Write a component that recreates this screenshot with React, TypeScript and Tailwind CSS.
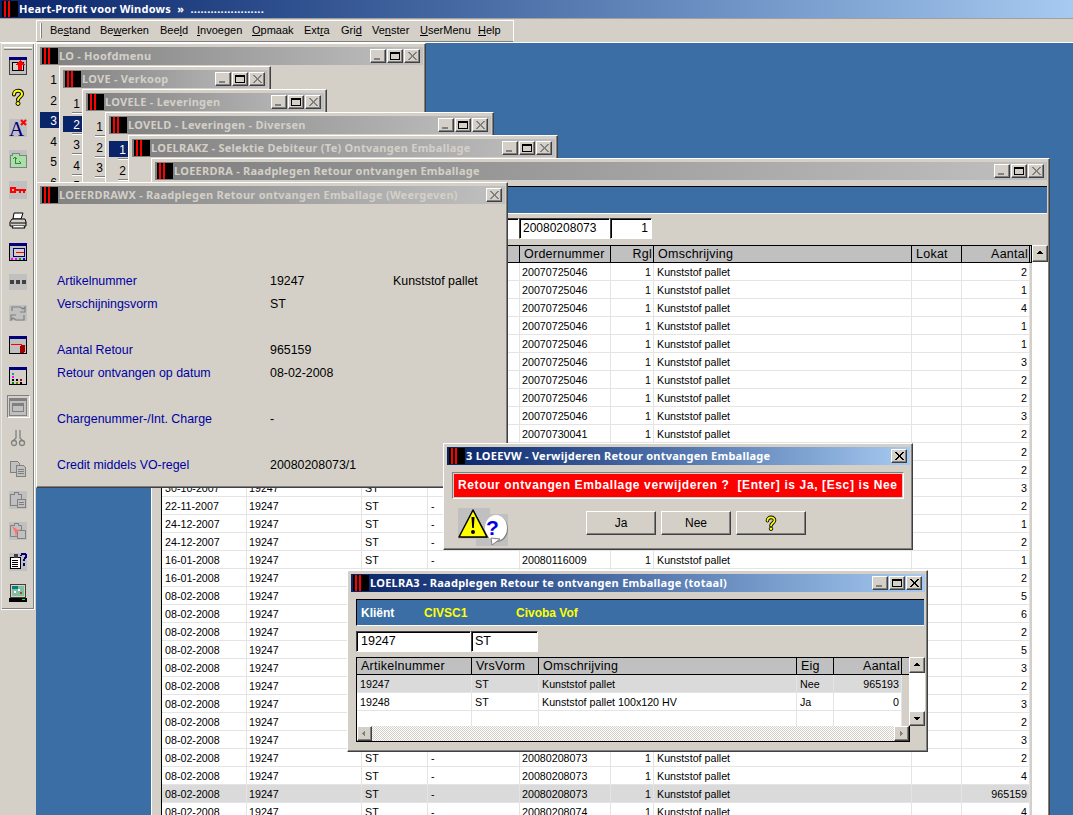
import type { ReactNode } from "react";

const raised =
  "border border-t-white border-l-white border-r-[#404040] border-b-[#404040] shadow-[inset_-1px_-1px_0_#808080] bg-[#d4d0c8]";
const sunken =
  "border border-t-[#404040] border-l-[#404040] border-r-white border-b-white shadow-[inset_1px_1px_0_#000] bg-white";
const sans = "font-['Liberation_Sans',Arial,sans-serif]";
const titleFont = "font-['Noto_Sans',Tahoma,sans-serif] font-bold text-[11px] tracking-[0.25px]";

function Logo() {
  return (
    <svg width="16" height="16" viewBox="0 0 16 16" className="shrink-0" shapeRendering="crispEdges">
      <rect width="16" height="16" fill="#000" />
      <rect x="2" width="2" height="16" fill="#f00" />
      <rect x="6" width="2" height="16" fill="#f00" />
    </svg>
  );
}

function TitleButton({ kind, dim }: { kind: "min" | "max" | "close"; dim?: boolean }) {
  const ink = dim ? "#808080" : "#000";
  return (
    <div className={`${raised} w-[16px] h-[14px] flex items-center justify-center`}>
      <svg width="12" height="10" viewBox="0 0 12 10" shapeRendering="crispEdges">
        {kind === "min" && <rect x="2" y="7" width="6" height="2" fill={ink} />}
        {kind === "max" && (
          <path d="M1.5 1.5h9v7h-9z" fill="none" stroke="#000" strokeWidth="1" />
        )}
        {kind === "max" && <rect x="1" y="1" width="10" height="2" fill="#000" />}
        {kind === "close" && (
          <path d="M2 1l8 8M3 1l8 8M10 1l-8 8M11 1l-8 8" stroke={ink} strokeWidth="1" fill="none" />
        )}
      </svg>
    </div>
  );
}

function Win({
  title,
  active,
  pos,
  closeOnly,
  closeDim,
  children,
}: {
  title: string;
  active?: boolean;
  pos: string;
  closeOnly?: boolean;
  closeDim?: boolean;
  children?: ReactNode;
}) {
  return (
    <div className={`${raised} absolute ${pos} pl-[3px] pt-[3px] pr-[2px] flex flex-col overflow-hidden`}>
      <div
        className={`h-[18px] shrink-0 flex items-center pl-[2px] pr-[3px] ${
          active
            ? "bg-gradient-to-r from-[#0a246a] to-[#a6caf0] text-white"
            : "bg-gradient-to-r from-[#808080] to-[#c0c0c0] text-[#d4d0c8]"
        }`}
      >
        <Logo />
        <span className={`${titleFont} ml-[1px] whitespace-nowrap flex-1`}>{title}</span>
        {!closeOnly && (
          <div className="flex gap-[1px]">
            <TitleButton kind="min" dim />
            <TitleButton kind="max" />
            <TitleButton kind="close" dim={closeDim ?? !active} />
          </div>
        )}
        {closeOnly && <TitleButton kind="close" dim={closeDim ?? !active} />}
      </div>
      {children}
    </div>
  );
}

function NumberColumn({
  count,
  selected,
  grooved,
  top,
}: {
  count: number;
  selected: number;
  grooved?: boolean;
  top: string;
}) {
  return (
    <div className={`${sans} text-[12px] w-[19px] ${top} flex flex-col`}>
      {Array.from({ length: count }, (_, i) => (
        <div key={i}>
          <div
            className={`h-[16px] pt-[1px] leading-[16px] text-right pr-[2px] ${
              i + 1 === selected ? "bg-[#0a246a] text-white" : "text-black"
            }`}
          >
            {i + 1}
          </div>
          <div className="h-[4.5px] flex items-center justify-end">
            {grooved && <div className="w-[10px] h-[2px] border-t border-t-[#808080] border-b border-b-white" />}
          </div>
        </div>
      ))}
    </div>
  );
}

type Col = { label: string; w: string; right?: boolean; tight?: boolean };

function GridTable({ cols, rows, shaded }: { cols: Col[]; rows: string[][]; shaded: number }) {
  return (
    <div className={`${sans} border-l border-l-black flex flex-col`}>
      <div className="flex h-[18px] border-t border-t-black border-b border-b-black bg-[#c0c0c0] shrink-0 text-[12.5px] tracking-[0.25px] text-black">
        {cols.map((c, j) => (
          <div
            key={j}
            className={`${c.w} shrink-0 border-r border-r-black leading-[16px] whitespace-nowrap overflow-hidden ${
              c.right ? "text-right pr-[1px]" : "px-[4px]"
            }`}
          >
            {c.label}
          </div>
        ))}
      </div>
      {rows.map((r, i) => (
        <div
          key={i}
          className={`flex h-[18px] shrink-0 text-[10.7px] text-black leading-[18px] border-b border-b-[#e4e4e4] ${
            i === shaded ? "bg-[#dadada]" : "bg-white"
          }`}
        >
          {cols.map((c, j) => (
            <div
              key={j}
              className={`${c.w} shrink-0 border-r border-r-[#e4e4e4] whitespace-nowrap overflow-hidden ${
                c.right ? "text-right pr-[2px]" : c.tight ? "pl-[2px]" : "pl-[3px]"
              }`}
            >
              {r[j]}
            </div>
          ))}
        </div>
      ))}
    </div>
  );
}

function ScrollButton({ dir, dim, cls }: { dir: "up" | "down" | "left" | "right"; dim?: boolean; cls: string }) {
  const paths = { up: "M8 4l4 4H4z", down: "M4 5h8l-4 4z", left: "M9 3v8L5 7z", right: "M6 3v8l4-4z" };
  return (
    <div className={`${raised} ${cls} shrink-0 flex items-center justify-center`}>
      <svg width="14" height="13" viewBox="0 0 16 14" shapeRendering="crispEdges">
        <path d={paths[dir]} fill={dim ? "#808080" : "#000"} />
      </svg>
    </div>
  );
}

function QuestionMark({ size = 18 }: { size?: number }) {
  return (
    <svg width={size} height={size} viewBox="0 0 18 18">
      <path d="M5 6.5C5 1.5 13 1.5 13 6c0 3-4 3-4 6" fill="none" stroke="#000" strokeWidth="4" strokeLinecap="round" />
      <path d="M5 6.5C5 1.5 13 1.5 13 6c0 3-4 3-4 6" fill="none" stroke="#ff0" strokeWidth="2" strokeLinecap="round" />
      <circle cx="9" cy="15.5" r="2" fill="#ff0" stroke="#000" />
    </svg>
  );
}

const g = "#c0c0c0";
const toolIcons: ReactNode[] = [
  <svg key="a" width="18" height="18" viewBox="0 0 18 18" shapeRendering="crispEdges">
    <rect x=".5" y=".5" width="17" height="17" fill={g} stroke="#404040" />
    <rect width="18" height="3" fill="#00007b" />
    <rect x="3.5" y="5.5" width="11" height="8" fill="#d4d0c8" stroke="#000" />
    <path d="M11 3l5 5h-3v5H9V8H6z" fill="#f00" />
  </svg>,
  <QuestionMark key="b" />,
  <svg key="c" width="18" height="18" viewBox="0 0 18 18">
    <rect width="18" height="18" fill={g} />
    <text x="0" y="17" fontFamily="'Liberation Serif',serif" fontSize="21" fill="#00007b">A</text>
    <path d="M12 1l5 5M17 1l-5 5" stroke="#f00" strokeWidth="2" />
  </svg>,
  <svg key="d" width="18" height="18" viewBox="0 0 18 18" shapeRendering="crispEdges">
    <rect width="18" height="18" fill={g} />
    <path d="M1 5h2V3h7v2h7v12H1z" fill="#a8e0a8" stroke="#808080" />
    <path d="M6 7v6h6M6 7L4 9M6 7l2 2M12 13l-2-2" stroke="#408040" fill="none" />
  </svg>,
  <svg key="e" width="18" height="18" viewBox="0 0 18 18" shapeRendering="crispEdges">
    <rect width="18" height="18" fill={g} />
    <rect x="2" y="7" width="4" height="4" fill="none" stroke="#f00" strokeWidth="2" />
    <path d="M6 8h11v2h-1v2h-2v-2h-2v2h-2v-2H6z" fill="#f00" />
  </svg>,
  <svg key="f" width="18" height="18" viewBox="0 0 18 18">
    <path d="M5 1h9l-2 6H4z" fill="#fff" stroke="#000" />
    <path d="M3 7h13l1 3v4H1v-4z" fill="#d4d0c8" stroke="#000" />
    <path d="M2 11h15M4 14l-1 2h13l-1-2" fill="#fff" stroke="#000" />
  </svg>,
  <svg key="g" width="18" height="18" viewBox="0 0 18 18" shapeRendering="crispEdges">
    <rect x=".5" y=".5" width="17" height="17" fill={g} stroke="#000" />
    <rect width="18" height="3" fill="#00007b" />
    <rect x="4.5" y="5.5" width="11" height="8" fill="#d4d0c8" stroke="#00007b" />
    <rect x="7" y="9" width="8" height="1" fill="#f00" />
    <path d="M2 15h2v2H2zM6 15h2v2H6z" fill="#f0f" />
    <path d="M10 15h2v2h-2z" fill="#0a0" />
    <path d="M14 15h2v2h-2z" fill="#00f" />
  </svg>,
  <svg key="h" width="18" height="18" viewBox="0 0 18 18" shapeRendering="crispEdges">
    <rect width="18" height="16" fill={g} />
    <path d="M1 6h4v4H1zM7 6h4v4H7zM13 6h4v4h-4z" fill="#404040" />
  </svg>,
  <svg key="i" width="18" height="18" viewBox="0 0 18 18">
    <rect width="18" height="16" fill={g} />
    <path d="M3 6V2h8l3 2 2-2v5h-5M15 10v5H7l-3-2-2 2v-5h5" fill="none" stroke="#808080" strokeWidth="1.2" />
  </svg>,
  <svg key="j" width="18" height="18" viewBox="0 0 18 18" shapeRendering="crispEdges">
    <rect x=".5" y=".5" width="17" height="17" fill={g} stroke="#000" />
    <rect width="18" height="3" fill="#00007b" />
    <rect x="2" y="8" width="11" height="1" fill="#f00" />
    <rect x="11" y="9" width="5" height="8" rx="2" fill="#a00000" />
  </svg>,
  <svg key="k" width="18" height="18" viewBox="0 0 18 18" shapeRendering="crispEdges">
    <rect x=".5" y=".5" width="17" height="17" fill="#d4d0c8" stroke="#000" />
    <rect width="18" height="3" fill="#00007b" />
    <path d="M3 6h2v2H3z" fill="#0aa" />
    <path d="M3 9h2v2H3z" fill="#f0f" />
    <path d="M3 12h2v2H3zM7 12h2v2H7z" fill="#000" />
    <path d="M11 12h2v2h-2z" fill="#a00" />
    <path d="M3 15h2v2H3z" fill="#008000" />
    <path d="M7 15h2v2H7z" fill="#808000" />
    <path d="M11 15h2v2h-2z" fill="#000" />
  </svg>,
  <div key="l" className="w-[23px] h-[23px] border border-t-[#808080] border-l-[#808080] border-r-white border-b-white flex items-center justify-center">
    <svg width="18" height="18" viewBox="0 0 18 18" shapeRendering="crispEdges">
      <rect x=".5" y=".5" width="17" height="17" fill={g} stroke="#808080" />
      <rect width="18" height="3" fill="#808080" />
      <rect x="3.5" y="5.5" width="11" height="8" fill="none" stroke="#808080" />
      <rect x="4" y="6" width="10" height="2" fill="#808080" />
    </svg>
  </div>,
  <svg key="m" width="18" height="18" viewBox="0 0 18 18">
    <path d="M7 1v8l-3 3M11 1v8l3 3" fill="none" stroke="#808080" strokeWidth="1.3" />
    <circle cx="5" cy="14" r="2.5" fill="none" stroke="#808080" strokeWidth="1.3" />
    <circle cx="13" cy="14" r="2.5" fill="none" stroke="#808080" strokeWidth="1.3" />
  </svg>,
  <svg key="n" width="18" height="18" viewBox="0 0 18 18" shapeRendering="crispEdges">
    <path d="M1.5 1.5h7l2 2v9h-9z" fill={g} stroke="#808080" />
    <path d="M7.5 5.5h7l2 2v9h-9z" fill={g} stroke="#808080" />
    <path d="M9 9h6M9 11h6M9 13h6" stroke="#808080" />
  </svg>,
  <svg key="o" width="18" height="18" viewBox="0 0 18 18" shapeRendering="crispEdges">
    <rect width="18" height="18" fill={g} />
    <path d="M1.5 3.5h4v-2h4v2h3v11h-11z" fill={g} stroke="#808080" />
    <path d="M8.5 8.5h8v8h-8z" fill={g} stroke="#808080" />
    <path d="M10 11h5M10 13h5" stroke="#808080" />
  </svg>,
  <svg key="p" width="18" height="18" viewBox="0 0 18 18">
    <rect width="18" height="18" fill={g} />
    <path d="M1.5 3.5h4v-2h4v2h3v11h-11z" fill={g} stroke="#808080" />
    <path d="M8.5 8.5h8v8h-8z" fill={g} stroke="#808080" />
    <path d="M3 4l6 4 4-1-5 3-1 6-1-6z" fill="#ff7070" />
  </svg>,
  <svg key="q" width="18" height="18" viewBox="0 0 18 18" shapeRendering="crispEdges">
    <rect width="18" height="18" fill={g} />
    <path d="M1.5 4.5h10v11h-10z" fill="#fff" stroke="#000" />
    <path d="M3 7h6M3 9h6M3 11h6M3 13h6" stroke="#000" />
    <path d="M5 1h4v4H5z" fill="#404040" />
    <path d="M12 3c1-3 5-3 5 0 0 2-2 2-2 5" fill="none" stroke="#00007b" strokeWidth="2" />
    <rect x="14" y="10" width="2" height="3" fill="#00007b" />
  </svg>,
  <svg key="r" width="18" height="18" viewBox="0 0 18 18" shapeRendering="crispEdges">
    <rect x="1.5" y=".5" width="15" height="13" fill="#d4d0c8" stroke="#404040" />
    <rect x="3" y="2" width="12" height="10" fill="#80c0a0" />
    <rect x="3" y="2" width="6" height="3" fill="#008080" />
    <path d="M5 7h2v2H5zM9 5h2v2H9z" fill="#fff" />
    <path d="M11 8h2v2h-2z" fill="#a05020" />
    <rect y="14" width="18" height="4" fill="#000" />
    <rect x="13" y="15" width="3" height="1" fill="#0f0" />
  </svg>,
];

const menus = [
  { pre: "Be", u: "s", post: "tand", w: "w-[50px]" },
  { pre: "Be", u: "w", post: "erken", w: "w-[60px]" },
  { pre: "Bee", u: "l", post: "d", w: "w-[37px]" },
  { pre: "", u: "I", post: "nvoegen", w: "w-[55px]" },
  { pre: "", u: "O", post: "pmaak", w: "w-[52px]" },
  { pre: "Ext", u: "r", post: "a", w: "w-[37px]" },
  { pre: "Gri", u: "d", post: "", w: "w-[31px]" },
  { pre: "Ve", u: "n", post: "ster", w: "w-[48px]" },
  { pre: "", u: "U", post: "serMenu", w: "w-[58px]" },
  { pre: "", u: "H", post: "elp", w: "w-[30px]" },
];

// columns left of Ordernummer sit behind the Weergeven window at the top
const mainCols: Col[] = [
  { label: "", w: "w-[85px]" },
  { label: "", w: "w-[115px]", tight: true },
  { label: "", w: "w-[66px]" },
  { label: "", w: "w-[92px]" },
  { label: "Ordernummer", w: "w-[91px]", tight: true },
  { label: "Rgl", w: "w-[43px]", right: true },
  { label: "Omschrijving", w: "w-[258px]" },
  { label: "Lokat", w: "w-[50px]" },
  { label: "Aantal", w: "w-[68px]", right: true },
];

const kunststof = "Kunststof pallet";

function topRow(order: string, qty: string) {
  return ["", "", "", "", order, "1", kunststof, "", qty];
}
function dialogRow(date: string, qty: string) {
  return [date, "19247", "ST", "-", "", "", "", "", qty];
}
function dateOnlyRow(date: string, qty: string) {
  return [date, "19247", "", "", "", "", "", "", qty];
}
function fullRow(date: string, order: string, qty: string) {
  return [date, "19247", "ST", "-", order, "1", kunststof, "", qty];
}

const mainRows: string[][] = [
  ...["2", "1", "4", "1", "1", "3", "2", "2", "3"].map((q) => topRow("20070725046", q)),
  topRow("20070730041", "2"),
  ["", "", "", "", "", "", "", "", "2"],
  ["", "", "", "", "", "", "", "", "2"],
  ["30-10-2007", "19247", "ST", "", "", "", "", "", "3"],
  dialogRow("22-11-2007", "2"),
  dialogRow("24-12-2007", "1"),
  dialogRow("24-12-2007", "2"),
  fullRow("16-01-2008", "20080116009", "1"),
  dateOnlyRow("16-01-2008", "2"),
  ...["5", "6", "2", "5", "3", "2", "3", "2", "3"].map((q) => dateOnlyRow("08-02-2008", q)),
  fullRow("08-02-2008", "20080208073", "2"),
  fullRow("08-02-2008", "20080208073", "4"),
  fullRow("08-02-2008", "20080208073", "965159"),
  fullRow("08-02-2008", "20080208074", "4"),
];

const totalCols: Col[] = [
  { label: "Artikelnummer", w: "w-[115px]" },
  { label: "VrsVorm", w: "w-[67px]" },
  { label: "Omschrijving", w: "w-[258px]" },
  { label: "Eig", w: "w-[37px]" },
  { label: "Aantal", w: "w-[68px]", right: true },
];

const totalRows = [
  ["19247", "ST", kunststof, "Nee", "965193"],
  ["19248", "ST", "Kunststof pallet 100x120 HV", "Ja", "0"],
  ["", "", "", "", ""],
];

const details = [
  { label: "Artikelnummer", value: "19247", extra: kunststof },
  { label: "Verschijningsvorm", value: "ST" },
  null,
  { label: "Aantal Retour", value: "965159" },
  { label: "Retour ontvangen op datum", value: "08-02-2008" },
  null,
  { label: "Chargenummer-/Int. Charge", value: "-" },
  null,
  { label: "Credit middels VO-regel", value: "20080208073/1" },
];

export default function App() {
  return (
    <div className={`${sans} w-[1073px] h-[815px] overflow-hidden bg-[#d4d0c8] flex flex-col`}>
      {/* App title */}
      <div className="h-[18px] shrink-0 flex items-center pl-[2px] bg-gradient-to-r from-[#0a246a] to-[#a6caf0] text-white">
        <Logo />
        <span className={`${titleFont} ml-[1px] whitespace-pre`}>Heart-Profit voor Windows  »  ......................</span>
      </div>

      {/* Menu bar */}
      <div className="h-[25px] shrink-0 border-t border-t-[#a0a0a0] border-b border-b-white pt-[1px]">
        <div className="ml-[36px] w-[478px] h-[22px] border border-t-white border-l-white border-r-white border-b-[#808080] flex items-center pb-[2px] text-[11px] text-black">
          <div className="ml-[3px] mr-[8px] w-[2px] h-[15px] border-l border-l-white border-r border-r-[#808080]" />
          {menus.map((m) => (
            <span key={m.pre + m.u} className={`${m.w} shrink-0`}>
              {m.pre}
              <span className="underline">{m.u}</span>
              {m.post}
            </span>
          ))}
        </div>
      </div>

      <div className="flex-1 flex min-h-0">
        {/* Tool column */}
        <div className="w-[36px] shrink-0">
          <div className="ml-[1px] w-[34px] border border-t-white border-l-[#e8e8e8] border-r-white border-b-white shadow-[inset_-1px_-1px_0_#808080] pt-[3px] pb-[1px] flex flex-col items-center">
            <div className="w-[28px] h-[3px] border-t border-t-white border-b border-b-[#808080] bg-[#d4d0c8]" />
            {toolIcons.map((icon, i) => (
              <div key={i} className="h-[31px] flex items-center justify-center">
                {icon}
              </div>
            ))}
          </div>
        </div>

        {/* Desktop */}
        <div className="flex-1 relative bg-[#3a6ea5] overflow-hidden">
          <Win title="LO - Hoofdmenu" pos="left-[0px] top-[0px] w-[390px] h-[150px]">
            <NumberColumn count={6} selected={3} top="pt-[6px]" />
          </Win>
          <Win title="LOVE - Verkoop" pos="left-[23px] top-[23px] w-[212px] h-[125px]">
            <NumberColumn count={5} selected={2} grooved top="pt-[7px]" />
          </Win>
          <Win title="LOVELE - Leveringen" pos="left-[46px] top-[46px] w-[245px] h-[100px]">
            <NumberColumn count={4} selected={0} grooved top="pt-[7px]" />
          </Win>
          <Win title="LOVELD - Leveringen - Diversen" pos="left-[69px] top-[69px] w-[389px] h-[75px]">
            <NumberColumn count={3} selected={1} grooved top="pt-[7px]" />
          </Win>
          <Win title="LOELRAKZ - Selektie Debiteur (Te) Ontvangen Emballage" pos="left-[92px] top-[92px] w-[430px] h-[55px]" />

          <Win title="LOEERDRA - Raadplegen Retour ontvangen Emballage" pos="left-[115px] top-[115px] w-[899px] h-[700px]">
            <div className="mt-[6px] h-[28px] shrink-0 bg-[#3a6ea5] border-t border-t-black border-b border-b-white" />
            <div className="mt-[4px] ml-[6px] h-[21px] shrink-0 flex text-[12px] text-black">
              <div className={`${sunken} w-[266px]`} />
              <div className={`${sunken} w-[92px]`} />
              <div className={`${sunken} w-[91px] px-[3px] leading-[19px]`}>20080208073</div>
              <div className={`${sunken} w-[42px] px-[3px] leading-[19px] text-right`}>1</div>
            </div>
            <div className="mt-[6px] ml-[6px] flex flex-1 min-h-0">
              <GridTable cols={mainCols} rows={mainRows} shaded={29} />
              <div className="w-[2px] shrink-0 h-[18px] bg-[#c0c0c0] border-t border-t-black border-b border-b-black border-r border-r-black" />
              <div className="w-[16px] shrink-0 bg-white flex flex-col">
                <ScrollButton dir="up" cls="h-[17px] w-[16px]" />
              </div>
            </div>
          </Win>

          <Win
            title="LOEERDRAWX - Raadplegen Retour ontvangen Emballage (Weergeven)"
            pos="left-[0px] top-[139px] w-[472px] h-[306px]"
            closeOnly
          >
            <div className="pt-[66px] pl-[17px] flex flex-col text-[12.4px]">
              {details.map((d, i) => (
                <div key={i} className="h-[23px] flex items-center">
                  {d && (
                    <>
                      <span className="w-[213px] shrink-0 text-[#0000a0]">{d.label}</span>
                      <span className="w-[123px] shrink-0 text-black">{d.value}</span>
                      <span className="text-black">{d.extra}</span>
                    </>
                  )}
                </div>
              ))}
            </div>
          </Win>

          <Win title="3 LOEEVW - Verwijderen Retour ontvangen Emballage" active closeDim={false} closeOnly pos="left-[407px] top-[400px] w-[470px] h-[107px]">
            <div className="mt-[7px] ml-[5px] mr-[6px] h-[27px] shrink-0 border border-t-[#808080] border-l-[#808080] border-r-white border-b-white p-[1px]">
              <div className="h-full bg-[#f00] text-white font-bold text-[12px] tracking-[0.62px] leading-[23px] pl-[4px] whitespace-pre">
                Retour ontvangen Emballage verwijderen ?  [Enter] is Ja, [Esc] is Nee
              </div>
            </div>
            <div className="flex mt-[9px] ml-[11px]">
              <svg width="50" height="38" viewBox="0 0 50 38" className="shrink-0">
                <rect width="32" height="31" fill="#c0c0c0" />
                <rect x="18" y="6" width="32" height="32" fill="#c0c0c0" />
                <ellipse cx="39" cy="21" rx="11" ry="13" fill="#808080" />
                <ellipse cx="38" cy="20" rx="11" ry="13" fill="#fff" />
                <path d="M33 30l1 7 8-6z" fill="#fff" stroke="#808080" />
                <text x="28" y="27" fontFamily="'Liberation Sans',sans-serif" fontWeight="700" fontSize="21" fill="#0000e0">?</text>
                <path d="M16 3L31 30H3z" fill="#707070" />
                <path d="M15 2L29 29H1z" fill="#ff0" stroke="#000" strokeWidth="1.5" strokeLinejoin="round" />
                <path d="M13.5 9h3l-.7 11h-1.6z" fill="#000" />
                <circle cx="15" cy="24" r="2" fill="#000" />
              </svg>
              <div className="ml-[78px] mt-[3px] flex gap-[5px] text-[12px] text-black">
                <div className={`${raised} w-[70px] h-[24px] flex items-center justify-center`}>Ja</div>
                <div className={`${raised} w-[70px] h-[24px] flex items-center justify-center`}>Nee</div>
                <div className={`${raised} w-[70px] h-[24px] flex items-center justify-center`}>
                  <QuestionMark size={16} />
                </div>
              </div>
            </div>
          </Win>

          <Win title="LOELRA3 - Raadplegen Retour te ontvangen Emballage (totaal)" active closeDim={false} pos="left-[311px] top-[527px] w-[581px] h-[182px]">
            <div className="mt-[7px] ml-[5px] mr-[1px] h-[27px] shrink-0 bg-[#3a6ea5] border-t border-t-black border-l border-l-black border-b border-b-white flex items-center text-[12px] font-bold text-[#ffff00]">
              <span className="w-[67px] pl-[4px] text-white">Kliënt</span>
              <span className="w-[92px]">CIVSC1</span>
              <span>Civoba Vof</span>
            </div>
            <div className="mt-[5px] ml-[5px] h-[21px] shrink-0 flex text-[12.5px] text-black">
              <div className={`${sunken} w-[115px] px-[4px] leading-[19px]`}>19247</div>
              <div className={`${sunken} w-[67px] px-[3px] leading-[19px]`}>ST</div>
            </div>
            <div className="mt-[5px] ml-[5px] flex h-[69px] shrink-0">
              <div className="overflow-hidden flex">
                <GridTable cols={totalCols} rows={totalRows} shaded={0} />
                <div className="w-[8px] shrink-0 h-[18px] bg-[#c0c0c0] border-t border-t-black border-b border-b-black" />
              </div>
              <div className="w-[16px] shrink-0 bg-white flex flex-col justify-between">
                <ScrollButton dir="up" cls="h-[16px] w-[16px]" />
                <ScrollButton dir="down" cls="h-[15px] w-[16px]" />
              </div>
            </div>
            <div className="ml-[5px] w-[554px] h-[16px] shrink-0 flex border-l border-l-black border-b border-b-black border-r border-r-black bg-[repeating-conic-gradient(#d4d0c8_0_25%,#ffffff_0_50%)] bg-[length:2px_2px] justify-between">
              <ScrollButton dir="left" dim cls="h-[15px] w-[15px]" />
              <ScrollButton dir="right" dim cls="h-[15px] w-[15px]" />
            </div>
          </Win>
        </div>
      </div>
    </div>
  );
}
